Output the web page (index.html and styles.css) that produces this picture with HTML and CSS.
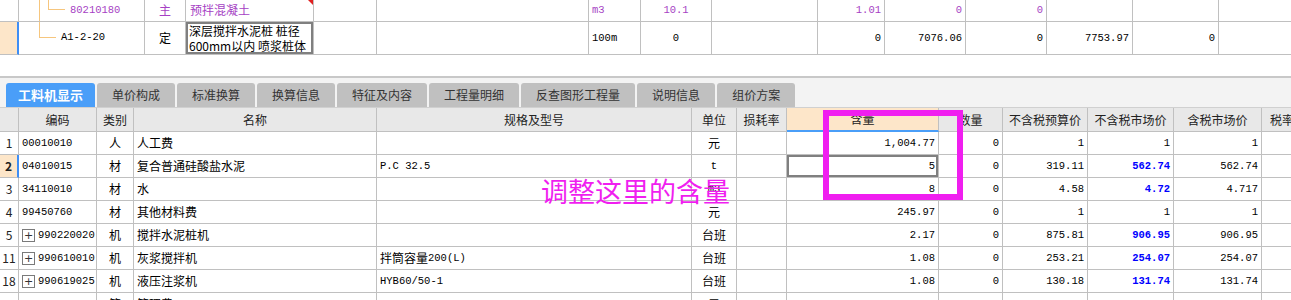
FILE: index.html
```html
<!DOCTYPE html>
<html lang="zh-CN">
<head>
<meta charset="utf-8">
<title>工料机显示</title>
<link rel="stylesheet" href="styles.css">
</head>
<body>
<div class="top">
  <div class="trow r1">
    <div class="cell"></div>
    <div class="cell code n purple"><span class="vline"></span><span class="elbow e1"></span>80210180</div>
    <div class="cell c purple">主</div>
    <div class="cell name purple flagged">预拌混凝土</div>
    <div class="cell"></div>
    <div class="cell"></div>
    <div class="cell n purple">m3</div>
    <div class="cell c n purple">10.1</div>
    <div class="cell"></div>
    <div class="cell r n purple">1.01</div>
    <div class="cell r n purple">0</div>
    <div class="cell r n purple">0</div>
    <div class="cell"></div>
    <div class="cell"></div>
    <div class="cell"></div>
  </div>
  <div class="trow r2">
    <div class="cell cur"></div>
    <div class="cell code n"><span class="elbow e2"></span>A1-2-20</div>
    <div class="cell c">定</div>
    <div class="cell name sel wrap">深层搅拌水泥桩 桩径<br>600mm以内 喷浆桩体</div>
    <div class="cell"></div>
    <div class="cell"></div>
    <div class="cell n">100m</div>
    <div class="cell c n">0</div>
    <div class="cell"></div>
    <div class="cell r n">0</div>
    <div class="cell r n">7076.06</div>
    <div class="cell r n">0</div>
    <div class="cell r n">7753.97</div>
    <div class="cell r n">0</div>
    <div class="cell"></div>
  </div>
</div>

<div class="tabbar">
  <div class="tab active">工料机显示</div>
  <div class="tab">单价构成</div>
  <div class="tab">标准换算</div>
  <div class="tab">换算信息</div>
  <div class="tab">特征及内容</div>
  <div class="tab">工程量明细</div>
  <div class="tab">反查图形工程量</div>
  <div class="tab">说明信息</div>
  <div class="tab">组价方案</div>
</div>

<div class="grid">
  <div class="brow head">
    <div class="cell"></div>
    <div class="cell c">编码</div>
    <div class="cell c">类别</div>
    <div class="cell c">名称</div>
    <div class="cell c">规格及型号</div>
    <div class="cell c">单位</div>
    <div class="cell c">损耗率</div>
    <div class="cell c hl">含量</div>
    <div class="cell c">数量</div>
    <div class="cell c">不含税预算价</div>
    <div class="cell c">不含税市场价</div>
    <div class="cell c">含税市场价</div>
    <div class="cell l">税率</div>
  </div>
  <div class="brow">
    <div class="cell c num">1</div>
    <div class="cell n">00010010</div>
    <div class="cell c">人</div>
    <div class="cell">人工费</div>
    <div class="cell"></div>
    <div class="cell c">元</div>
    <div class="cell"></div>
    <div class="cell r n">1,004.77</div>
    <div class="cell r n">0</div>
    <div class="cell r n">1</div>
    <div class="cell r n">1</div>
    <div class="cell r n">1</div>
    <div class="cell"></div>
  </div>
  <div class="brow">
    <div class="cell c num cur b">2</div>
    <div class="cell n">04010015</div>
    <div class="cell c">材</div>
    <div class="cell">复合普通硅酸盐水泥</div>
    <div class="cell n">P.C 32.5</div>
    <div class="cell c n">t</div>
    <div class="cell"></div>
    <div class="cell r n sel">5</div>
    <div class="cell r n">0</div>
    <div class="cell r n">319.11</div>
    <div class="cell r n blue">562.74</div>
    <div class="cell r n">562.74</div>
    <div class="cell"></div>
  </div>
  <div class="brow">
    <div class="cell c num">3</div>
    <div class="cell n">34110010</div>
    <div class="cell c">材</div>
    <div class="cell">水</div>
    <div class="cell"></div>
    <div class="cell c n">m3</div>
    <div class="cell"></div>
    <div class="cell r n">8</div>
    <div class="cell r n">0</div>
    <div class="cell r n">4.58</div>
    <div class="cell r n blue">4.72</div>
    <div class="cell r n">4.717</div>
    <div class="cell"></div>
  </div>
  <div class="brow">
    <div class="cell c num">4</div>
    <div class="cell n">99450760</div>
    <div class="cell c">材</div>
    <div class="cell">其他材料费</div>
    <div class="cell"></div>
    <div class="cell c">元</div>
    <div class="cell"></div>
    <div class="cell r n">245.97</div>
    <div class="cell r n">0</div>
    <div class="cell r n">1</div>
    <div class="cell r n">1</div>
    <div class="cell r n">1</div>
    <div class="cell"></div>
  </div>
  <div class="brow">
    <div class="cell c num">5</div>
    <div class="cell n"><span class="plus">+</span>990220020</div>
    <div class="cell c">机</div>
    <div class="cell">搅拌水泥桩机</div>
    <div class="cell"></div>
    <div class="cell c">台班</div>
    <div class="cell"></div>
    <div class="cell r n">2.17</div>
    <div class="cell r n">0</div>
    <div class="cell r n">875.81</div>
    <div class="cell r n blue">906.95</div>
    <div class="cell r n">906.95</div>
    <div class="cell"></div>
  </div>
  <div class="brow">
    <div class="cell c num">11</div>
    <div class="cell n"><span class="plus">+</span>990610010</div>
    <div class="cell c">机</div>
    <div class="cell">灰浆搅拌机</div>
    <div class="cell">拌筒容量<span class="n">200(L)</span></div>
    <div class="cell c">台班</div>
    <div class="cell"></div>
    <div class="cell r n">1.08</div>
    <div class="cell r n">0</div>
    <div class="cell r n">253.21</div>
    <div class="cell r n blue">254.07</div>
    <div class="cell r n">254.07</div>
    <div class="cell"></div>
  </div>
  <div class="brow">
    <div class="cell c num">18</div>
    <div class="cell n"><span class="plus">+</span>990619025</div>
    <div class="cell c">机</div>
    <div class="cell">液压注浆机</div>
    <div class="cell n">HYB60/50-1</div>
    <div class="cell c">台班</div>
    <div class="cell"></div>
    <div class="cell r n">1.08</div>
    <div class="cell r n">0</div>
    <div class="cell r n">130.18</div>
    <div class="cell r n blue">131.74</div>
    <div class="cell r n">131.74</div>
    <div class="cell"></div>
  </div>
  <div class="brow">
    <div class="cell c num">25</div>
    <div class="cell n">GLF</div>
    <div class="cell c">管</div>
    <div class="cell">管理费</div>
    <div class="cell"></div>
    <div class="cell c">元</div>
    <div class="cell"></div>
    <div class="cell r n">776.5</div>
    <div class="cell r n">0</div>
    <div class="cell r n">1</div>
    <div class="cell r n">1</div>
    <div class="cell r n">1</div>
    <div class="cell"></div>
  </div>
</div>

<div class="mark"></div>
<div class="note">调整这里的含量</div>
</body>
</html>
```

FILE: styles.css
```css
html, body {
  margin: 0;
  padding: 0;
}
body {
  width: 1291px;
  height: 300px;
  overflow: hidden;
  position: relative;
  background: #ffffff;
  color: #000000;
  font-family: "Noto Sans CJK SC", sans-serif;
  font-size: 12px;
}

.cell {
  box-sizing: border-box;
  border-right: 1px solid #c0c0c0;
  border-bottom: 1px solid #c0c0c0;
  display: flex;
  align-items: center;
  overflow: hidden;
  white-space: nowrap;
  padding: 0 3px;
  line-height: 14px;
}
.cell.c { justify-content: center; }
.cell.r { justify-content: flex-end; }
.n {
  font-family: "Liberation Mono", "Noto Sans CJK SC", monospace;
  font-size: 10.5px;
}
.purple { color: #a63fc4; }
.blue { color: #0000ff; font-weight: bold; }
.b { font-weight: bold; }

/* top table */
.trow {
  display: grid;
  grid-template-columns: 19px 126px 41px 128px 63px 212px 52px 71px 106px 67px 81px 81px 86px 86px 100px;
}
.r1 { height: 22px; }
.r1 .cell { padding-bottom: 2px; }
.r2 { height: 33px; }
.cur {
  background: #fde6c9;
  border-right: 2px solid #3f8ef5;
}
.code {
  padding: 0;
  align-items: flex-start;
}
.vline {
  width: 8px;
  margin-left: 20px;
  border-left: 1px solid #f6c67e;
  flex: none;
  align-self: stretch;
}
.elbow {
  flex: none;
  border-left: 1px solid #f6c67e;
  border-bottom: 1px solid #f6c67e;
  box-sizing: border-box;
  margin-right: 5px;
}
.e1 { width: 17px; height: 10px; }
.e2 { width: 17px; height: 16px; margin-left: 20px; }
.r1 .code { padding-bottom: 0; line-height: 20px; }
.r2 .code { line-height: 31px; }
.name { padding-left: 4px; }
.flagged { position: relative; }
.flagged::after {
  content: "";
  position: absolute;
  right: 0;
  top: 0;
  border-top: 5px solid #e02020;
  border-left: 5px solid transparent;
}
.sel { box-shadow: inset 0 0 0 2px #808080; }
.wrap {
  white-space: normal;
  line-height: 15px;
  padding-left: 3px;
  font-size: 12px;
}

/* tabs */
.tabbar {
  margin-top: 21px;
  border-top: 2px solid #c8c8c8;
  border-bottom: 1px solid #d0d0d0;
  background: #f3f3f3;
  padding: 5px 0 0 6px;
  display: flex;
  gap: 2px;
}
.tab {
  height: 24px;
  line-height: 24px;
  padding: 0 15px;
  background: #c0c0c0;
  color: #333333;
  border-radius: 3px 3px 0 0;
  font-size: 12px;
  white-space: nowrap;
}
.tab.active {
  background: #4a9ef8;
  color: #ffffff;
  font-weight: bold;
  font-size: 13px;
  padding: 0 12px;
}

/* bottom grid */
.brow {
  display: grid;
  grid-template-columns: 19px 78px 37px 243px 315px 45px 50px 152px 64px 85px 86px 88px 68px;
  height: 23px;
}
.brow.head {
  height: 24px;
  background: #e8e8e8;
  color: #222222;
}
.head .cell.hl {
  background: #fde6c9;
  border-bottom: 2px solid #4a9ef8;
}
.head .cell.l { justify-content: flex-start; padding-left: 8px; }
.num { padding: 0; color: #222222; }
.plus {
  display: inline-flex;
  align-items: center;
  justify-content: center;
  width: 13px;
  height: 13px;
  box-sizing: border-box;
  border: 1px solid #7a7a7a;
  font-family: "DejaVu Sans", sans-serif;
  font-size: 11px;
  line-height: 1;
  margin-right: 3px;
  color: #333333;
  flex: none;
}

/* annotation overlay */
.mark {
  position: absolute;
  left: 823px;
  top: 110px;
  width: 140px;
  height: 90px;
  box-sizing: border-box;
  border: 6px solid #f01ef0;
}
.note {
  position: absolute;
  left: 541px;
  top: 177px;
  font-size: 27px;
  line-height: 27px;
  color: #f01ef0;
  font-family: "Noto Sans CJK SC", sans-serif;
  white-space: nowrap;
}
```
